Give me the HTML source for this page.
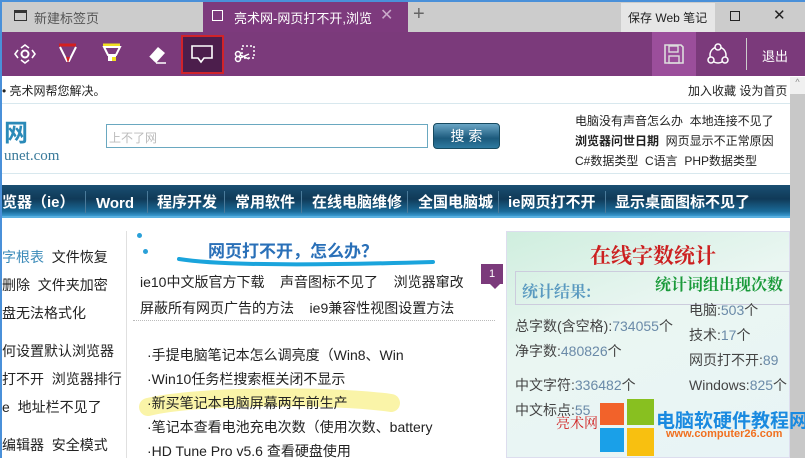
<!DOCTYPE html>
<html><head><meta charset="utf-8"><style>
*{margin:0;padding:0;box-sizing:border-box}
body{width:805px;height:458px;overflow:hidden;position:relative;background:#fff;font-family:"Liberation Sans","Noto Sans CJK SC",sans-serif;color:#222}
.a{position:absolute;white-space:nowrap}
.n{position:absolute;top:192px;height:22px;line-height:22px;font-size:15px;font-weight:bold;color:#fff;white-space:nowrap}
.s{position:absolute;top:191px;width:1px;height:22px;background:#4a7a9a}
</style></head><body>
<!-- tab bar -->
<div class="a" style="left:0;top:0;width:805px;height:32px;background:#cccccc"></div>
<div class="a" style="left:0;top:0;width:805px;height:2px;background:#4a90d9"></div>
<div class="a" style="left:0;top:0;width:2px;height:458px;background:#4a90d9"></div>
<div class="a" style="left:14px;top:10px;width:13px;height:11px;border:1.5px solid #333;border-top-width:3px"></div>
<div class="a" style="left:34px;top:8px;font-size:13px;color:#555">新建标签页</div>
<div class="a" style="left:203px;top:2px;width:205px;height:30px;background:#7d3a7d"></div>
<div class="a" style="left:212px;top:10px;width:11px;height:11px;border:1.5px solid #fff"></div>
<div class="a" style="left:234px;top:8px;font-size:13px;color:#fff">亮术网-网页打不开,浏览</div>
<div class="a" style="left:380px;top:5px;font-size:16px;color:#c9a9c9">✕</div>
<div class="a" style="left:413px;top:3px;font-size:20px;color:#666">+</div>
<div class="a" style="left:621px;top:3px;width:94px;height:29px;background:#e6e6e6"></div>
<div class="a" style="left:628px;top:9px;font-size:12px;color:#222">保存 Web 笔记</div>
<div class="a" style="left:730px;top:11px;width:10px;height:10px;border:1px solid #222"></div>
<div class="a" style="left:773px;top:6px;font-size:15px;color:#222">✕</div>
<!-- toolbar -->
<div class="a" style="left:2px;top:32px;width:803px;height:44px;background:#7b3a7b"></div>
<svg class="a" style="left:14px;top:44px" width="22" height="20" viewBox="0 0 22 20"><circle cx="11" cy="10" r="3.5" fill="none" stroke="#fff" stroke-width="2"/><path d="M7 4l4-3 4 3M7 16l4 3 4-3M4 6l-3 4 3 4M18 6l3 4-3 4" fill="none" stroke="#fff" stroke-width="1.6"/></svg>
<svg class="a" style="left:58px;top:43px" width="20" height="22"><path d="M1 2h17" stroke="#d42020" stroke-width="3"/><path d="M2 4l7 14h2l7-14" fill="none" stroke="#fff" stroke-width="2"/><path d="M8 14h4l-2 6z" fill="#d42020"/></svg>
<svg class="a" style="left:102px;top:43px" width="20" height="22"><path d="M1 2h17" stroke="#f0e020" stroke-width="3"/><path d="M2 4l4 8h8l4-8z" fill="none" stroke="#fff" stroke-width="2"/><rect x="6" y="12" width="8" height="6" fill="#fff"/><rect x="10" y="14" width="4" height="4" fill="#f0e020"/></svg>
<svg class="a" style="left:146px;top:44px" width="22" height="20"><path d="M3 13l9-10 7 6-9 10z" fill="#fff"/><path d="M3 13l4 4" stroke="#7b3a7b" stroke-width="1"/><path d="M10 19h10" stroke="#fff" stroke-width="1.5"/></svg>
<div class="a" style="left:181px;top:35px;width:43px;height:39px;background:#4c1e4c;border:2px solid #d0232a"></div>
<svg class="a" style="left:191px;top:45px" width="24" height="20"><path d="M1 1h20v12H13l-3 4-3-4H1z" fill="none" stroke="#fff" stroke-width="1.6"/></svg>
<svg class="a" style="left:233px;top:44px" width="24" height="22"><rect x="9" y="2" width="12" height="12" fill="none" stroke="#fff" stroke-width="1.5" stroke-dasharray="2 2"/><circle cx="5" cy="15" r="2.5" fill="none" stroke="#fff" stroke-width="1.5"/><circle cx="5" cy="10" r="2.5" fill="none" stroke="#fff" stroke-width="1.5"/><path d="M7 11l9 4M7 14l9-4" stroke="#fff" stroke-width="1.5"/></svg>
<div class="a" style="left:652px;top:32px;width:44px;height:44px;background:#9b4e9b"></div>
<svg class="a" style="left:664px;top:44px" width="20" height="20"><path d="M1 1h16l2 2v16H1z" fill="none" stroke="#ddd" stroke-width="1.6"/><rect x="5" y="2" width="9" height="6" fill="none" stroke="#ddd" stroke-width="1.4"/><rect x="5" y="12" width="10" height="7" fill="none" stroke="#ddd" stroke-width="1.4"/></svg>
<svg class="a" style="left:706px;top:42px" width="24" height="24"><circle cx="12" cy="13" r="8" fill="none" stroke="#fff" stroke-width="1.5"/><circle cx="12" cy="5" r="3" fill="#7b3a7b" stroke="#fff" stroke-width="1.5"/><circle cx="5" cy="18" r="3" fill="#7b3a7b" stroke="#fff" stroke-width="1.5"/><circle cx="19" cy="18" r="3" fill="#7b3a7b" stroke="#fff" stroke-width="1.5"/></svg>
<div class="a" style="left:746px;top:38px;width:1px;height:32px;background:#ccc"></div>
<div class="a" style="left:762px;top:46px;font-size:13px;color:#fff">退出</div>
<!-- page -->
<div class="a" style="left:790px;top:77px;width:15px;height:381px;background:#c8c8c8"></div>
<div class="a" style="left:790px;top:77px;width:15px;height:17px;background:#f0f0f0;font-size:9px;color:#888;text-align:center">^</div>
<div class="a" style="left:2px;top:82px;font-size:12px;color:#222">• 亮术网帮您解决。</div>
<div class="a" style="left:688px;top:82px;font-size:12px;color:#222">加入收藏 设为首页</div>
<div class="a" style="left:2px;top:103px;width:788px;height:1px;background:#d8e8ee"></div>
<div class="a" style="left:4px;top:113px;font-size:24px;font-weight:bold;color:#2a8ab8">网</div>
<div class="a" style="left:4px;top:148px;font-size:15px;color:#3a7a9a;font-family:'Liberation Serif',serif">unet.com</div>
<div class="a" style="left:106px;top:124px;width:322px;height:24px;border:1px solid #6aa8c0"></div>
<div class="a" style="left:109px;top:129px;font-size:12px;color:#bbb">上不了网</div>
<div class="a" style="left:433px;top:123px;width:67px;height:26px;border-radius:4px;background:linear-gradient(#6aa6c6,#1c5a7c 60%,#2e7aa0);border:1px solid #174a60;color:#fff;font-size:14px;text-align:center;line-height:24px">搜 索</div>
<div class="a" style="left:575px;top:112px;font-size:12px;color:#222">电脑没有声音怎么办&nbsp;&nbsp;本地连接不见了</div>
<div class="a" style="left:575px;top:132px;font-size:12px;color:#222"><b>浏览器问世日期</b>&nbsp;&nbsp;网页显示不正常原因</div>
<div class="a" style="left:575px;top:152px;font-size:12px;color:#222">C#数据类型&nbsp;&nbsp;C语言&nbsp;&nbsp;PHP数据类型</div>
<div class="a" style="left:2px;top:173px;width:788px;height:1px;background:#d8e8ee"></div>
<div class="a" style="left:2px;top:185px;width:788px;height:33px;background:linear-gradient(#1a4f72,#103a58 45%,#1a6a98 85%,#3a9ad0);border-bottom:2px solid #5ab0e0"></div>
<div class="n" style="left:2px">览器（ie）</div><div class="s" style="left:85px"></div>
<div class="n" style="left:96px;top:193px">Word</div><div class="s" style="left:147px"></div>
<div class="n" style="left:157px">程序开发</div><div class="s" style="left:224px"></div>
<div class="n" style="left:235px">常用软件</div><div class="s" style="left:301px"></div>
<div class="n" style="left:312px">在线电脑维修</div><div class="s" style="left:407px"></div>
<div class="n" style="left:418px">全国电脑城</div><div class="s" style="left:498px"></div>
<div class="n" style="left:508px">ie网页打不开</div><div class="s" style="left:605px"></div>
<div class="n" style="left:615px">显示桌面图标不见了</div>
<div class="a" style="left:126px;top:231px;width:1px;height:227px;background:#e0e0e0"></div>
<div class="a" style="left:2px;top:243px;font-size:14px;line-height:28px;color:#222">
<span style="color:#3a8ab8">字根表</span>&nbsp; 文件恢复<br>删除&nbsp; 文件夹加密<br>盘无法格式化<br><div style="height:10px"></div>何设置默认浏览器<br>打不开&nbsp; 浏览器排行<br>e&nbsp; 地址栏不见了<br><div style="height:10px"></div>编辑器&nbsp; 安全模式</div>
<div class="a" style="left:137px;top:233px;width:5px;height:5px;border-radius:50%;background:#2aa0d8"></div>
<div class="a" style="left:143px;top:249px;width:5px;height:5px;border-radius:50%;background:#2aa0d8"></div>
<div class="a" style="left:208px;top:237px;font-size:17px;font-weight:bold;color:#2a70b8;font-family:'Noto Sans CJK SC',sans-serif">网页打不开，怎么办？</div>
<svg class="a" style="left:175px;top:255px" width="262" height="16"><path d="M4 4C40 10 120 11 258 7" fill="none" stroke="#1aa4dc" stroke-width="4" stroke-linecap="round"/></svg>
<div class="a" style="left:140px;top:272px;font-size:14px;color:#222">ie10中文版官方下载&nbsp;&nbsp;&nbsp;&nbsp;声音图标不见了&nbsp;&nbsp;&nbsp;&nbsp;浏览器窜改</div>
<div class="a" style="left:140px;top:298px;font-size:14px;color:#222">屏蔽所有网页广告的方法&nbsp;&nbsp;&nbsp;&nbsp;ie9兼容性视图设置方法</div>
<div class="a" style="left:133px;top:320px;width:362px;border-top:1px dotted #bbb"></div>
<div class="a" style="left:481px;top:264px;width:22px;height:20px;background:#7b3a7b;color:#fff;font-size:11px;text-align:center;line-height:20px">1</div>
<div class="a" style="left:490px;top:284px;border:5px solid transparent;border-top-color:#7b3a7b"></div>
<svg class="a" style="left:136px;top:387px" width="270" height="36"><path d="M12 20C60 8 200 8 255 16" fill="none" stroke="#faf4a8" stroke-width="18" stroke-linecap="round"/></svg>
<div class="a" style="left:147px;top:343px;font-size:14px;line-height:24px;color:#222">·手提电脑笔记本怎么调亮度（Win8、Win<br>·Win10任务栏搜索框关闭不显示<br>·新买笔记本电脑屏幕两年前生产<br>·笔记本查看电池充电次数（使用次数、battery<br>·HD Tune Pro v5.6 查看硬盘使用</div>
<!-- right box -->
<div class="a" style="left:506px;top:231px;width:284px;height:227px;border:1px solid #dde;background:linear-gradient(160deg,#cfeede,#eaf6f2 40%,#e8f4f6)"></div>
<div class="a" style="left:590px;top:240px;font-size:21px;font-weight:bold;color:#cc2020;font-family:'Noto Serif CJK SC',serif">在线字数统计</div>
<div class="a" style="left:515px;top:271px;width:275px;height:34px;border:1px solid #ccd"></div>
<div class="a" style="left:522px;top:279px;font-size:16px;font-weight:bold;color:#5a9ac0;font-family:'Noto Serif CJK SC',serif">统计结果:</div>
<div class="a" style="left:655px;top:272px;font-size:16px;font-weight:bold;color:#1a9a3a;font-family:'Noto Serif CJK SC',serif">统计词组出现次数</div>
<div class="a" style="left:515px;top:314px;font-size:14px;line-height:25px;color:#444">总字数(含空格):<span style="color:#6a8aa8">734055</span>个<br>净字数:<span style="color:#6a8aa8">480826</span>个<br><div style="height:9px"></div>中文字符:<span style="color:#6a8aa8">336482</span>个<br>中文标点:<span style="color:#6a8aa8">55</span></div>
<div class="a" style="left:689px;top:298px;font-size:14px;line-height:25px;color:#444">电脑:<span style="color:#6a8aa8">503</span>个<br>技术:<span style="color:#6a8aa8">17</span>个<br>网页打不开:<span style="color:#6a8aa8">89</span><br>Windows:<span style="color:#6a8aa8">825</span>个</div>
<div class="a" style="left:600px;top:403px;width:24px;height:22px;background:#f2622a"></div>
<div class="a" style="left:627px;top:399px;width:27px;height:26px;background:#88c020"></div>
<div class="a" style="left:600px;top:428px;width:24px;height:24px;background:#1aa0e8"></div>
<div class="a" style="left:627px;top:428px;width:27px;height:28px;background:#f8c010"></div>
<div class="a" style="left:556px;top:413px;font-size:14px;color:#d02020;font-family:'Noto Serif CJK SC',serif">亮术网</div>
<div class="a" style="left:656px;top:406px;font-size:19px;font-weight:bold;color:#1a8ae0">电脑软硬件教程网</div>
<div class="a" style="left:666px;top:428px;font-size:11px;font-weight:bold;color:#f07020">www.computer26.com</div>
</body></html>
